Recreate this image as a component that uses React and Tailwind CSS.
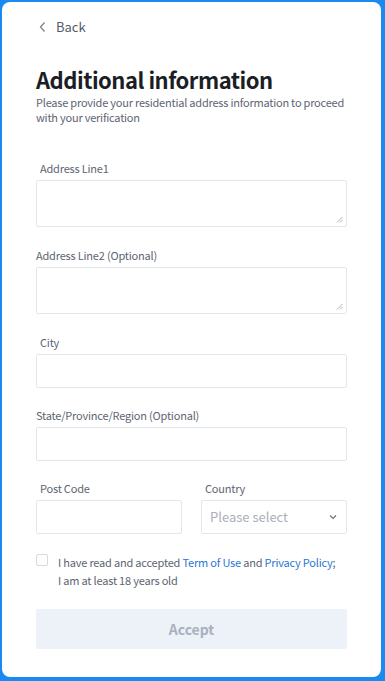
import React from "react";

function Label({ children, indent }) {
  return (
    <div className={`text-[11px] leading-[16px] tracking-[-0.2px] text-[#5d6471] ${indent ? "pl-[4px]" : ""}`}>{children}</div>
  );
}

function Resize() {
  return (
    <svg className="absolute right-[3px] bottom-[3px]" width="7" height="7" viewBox="0 0 7 7">
      <path d="M6.5 1 L1 6.5 M6.5 4 L4 6.5" stroke="#9aa0a8" strokeWidth="0.8" />
    </svg>
  );
}

export default function App() {
  return (
    <div className="w-[385px] h-[681px] bg-[#1a8af3] pt-[2px] pl-[2px] pr-[4px] pb-[4px]" style={{ fontFamily: '"Noto Sans CJK SC", "Noto Sans", sans-serif' }}>
      <div className="h-full w-full bg-white rounded-[8px] px-[34px] pt-[15px]">
        <div className="flex items-center h-[20px] text-[#555c69]">
          <svg width="10" height="12" viewBox="0 0 10 12" className="ml-[2px]">
            <path d="M6.5 1.5 L2.5 6 L6.5 10.5" fill="none" stroke="#7d838e" strokeWidth="1.3" />
          </svg>
          <span className="ml-[8px] text-[13px]">Back</span>
        </div>
        <h1 className="mt-[28px] text-[22px] leading-[28px] font-bold tracking-[-0.5px] text-[#1b1e25]">Additional information</h1>
        <p className="mt-[2px] text-[11px] leading-[15px] tracking-[-0.22px] text-[#5d6471]">
          Please provide your residential address information to proceed with your verification
        </p>

        <div className="mt-[35px]">
          <Label indent>Address Line1</Label>
          <div className="relative mt-[4px] h-[47px] border border-[#e3e6eb] rounded-[2px]"><Resize /></div>
        </div>
        <div className="mt-[20px]">
          <Label>Address Line2 (Optional)</Label>
          <div className="relative mt-[4px] h-[47px] border border-[#e3e6eb] rounded-[2px]"><Resize /></div>
        </div>
        <div className="mt-[20px]">
          <Label indent>City</Label>
          <div className="mt-[4px] h-[34px] border border-[#e3e6eb] rounded-[2px]"></div>
        </div>
        <div className="mt-[19px]">
          <Label>State/Province/Region (Optional)</Label>
          <div className="mt-[4px] h-[34px] border border-[#e3e6eb] rounded-[2px]"></div>
        </div>
        <div className="mt-[19px] flex gap-[19px]">
          <div className="flex-1">
            <Label indent>Post Code</Label>
            <div className="mt-[4px] h-[34px] border border-[#e3e6eb] rounded-[2px]"></div>
          </div>
          <div className="flex-1">
            <Label indent>Country</Label>
            <div className="mt-[4px] h-[34px] border border-[#e3e6eb] rounded-[2px] flex items-center justify-between pl-[8px] pr-[8px]">
              <span className="text-[13px] text-[#a9afb9]">Please select</span>
              <svg width="10" height="8" viewBox="0 0 10 8">
                <path d="M2 2.5 L5 5.5 L8 2.5" fill="none" stroke="#6b717c" strokeWidth="1.2" />
              </svg>
            </div>
          </div>
        </div>
        <div className="mt-[19px] flex">
          <div className="w-[12px] h-[12px] border border-[#d7dbe1] rounded-[2px] mt-[1px] shrink-0"></div>
          <div className="ml-[10px] text-[11px] leading-[18px] tracking-[-0.2px] text-[#5d6471] whitespace-nowrap">
            I have read and accepted <span className="text-[#2a77d4]">Term of Use</span> and <span className="text-[#2a77d4]">Privacy Policy</span>;<br />
            I am at least 18 years old
          </div>
        </div>
        <div className="mt-[20px] h-[40px] bg-[#edf1f8] rounded-[2px] flex items-center justify-center text-[14px] font-bold text-[#a9b1be]">
          Accept
        </div>
      </div>
    </div>
  );
}
